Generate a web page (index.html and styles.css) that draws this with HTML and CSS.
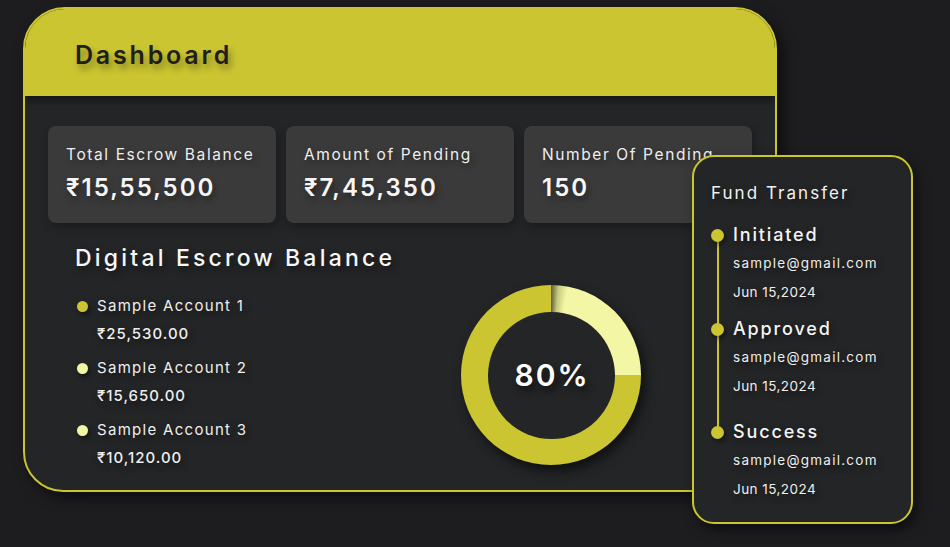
FILE: index.html
```html
<!DOCTYPE html>
<html lang="en">
<head>
<meta charset="utf-8">
<title>Dashboard</title>
<link rel="stylesheet" href="styles.css">
</head>
<body>
<div class="page">
  <section class="dash">
    <header class="dash-head"><h1>Dashboard</h1></header>
    <div class="dash-body">
      <div class="stats">
        <div class="stat"><div class="stat-label">Total Escrow Balance</div><div class="stat-value">₹15,55,500</div></div>
        <div class="stat"><div class="stat-label">Amount of Pending</div><div class="stat-value">₹7,45,350</div></div>
        <div class="stat"><div class="stat-label">Number Of Pending</div><div class="stat-value">150</div></div>
      </div>
      <div class="lower">
        <div class="balance">
          <h2>Digital Escrow Balance</h2>
          <ul class="legend">
            <li><span class="dot dot-strong"></span><div><div class="acc">Sample Account 1</div><div class="amt">₹25,530.00</div></div></li>
            <li><span class="dot dot-pale"></span><div><div class="acc">Sample Account 2</div><div class="amt">₹15,650.00</div></div></li>
            <li><span class="dot dot-pale"></span><div><div class="acc">Sample Account 3</div><div class="amt">₹10,120.00</div></div></li>
          </ul>
        </div>
        <div class="donut"><div class="donut-hole">80%</div></div>
      </div>
    </div>
  </section>
  <aside class="fund">
    <h3>Fund Transfer</h3>
    <div class="timeline">
      <div class="step"><div class="step-title"><span class="step-dot"></span>Initiated</div><div class="step-line step-mail">sample@gmail.com</div><div class="step-line step-date">Jun 15,2024</div></div>
      <div class="step"><div class="step-title"><span class="step-dot"></span>Approved</div><div class="step-line step-mail">sample@gmail.com</div><div class="step-line step-date">Jun 15,2024</div></div>
      <div class="step step-last"><div class="step-title"><span class="step-dot"></span>Success</div><div class="step-line step-mail">sample@gmail.com</div><div class="step-line step-date">Jun 15,2024</div></div>
    </div>
  </aside>
</div>
</body>
</html>
```

FILE: styles.css
```css
* { box-sizing: border-box; }
html, body { margin: 0; padding: 0; }
body {
  background: #1d1c1e;
  font-family: "Inter", "Noto Sans", sans-serif;
  color: #f1f1f1;
  width: 950px;
  height: 547px;
  overflow: hidden;
}
.page {
  position: relative;
  padding: 7px 0 0 23px;
  height: 547px;
}
.dash {
  width: 754px;
  height: 485px;
  border: 2px solid #cbc531;
  border-radius: 42px 42px 0 40px;
  background: #242527;
  overflow: hidden;
  box-shadow: 6px 6px 14px rgba(0,0,0,0.55);
  display: flex;
  flex-direction: column;
}
.dash-head {
  background: #cbc531;
  height: 87px;
  padding: 31px 0 0 50px;
  position: relative;
  z-index: 1;
  box-shadow: 0 4px 8px rgba(0,0,0,0.45);
}
.dash-head h1 {
  margin: 0;
  font-size: 25px;
  line-height: 30px;
  font-weight: 600;
  letter-spacing: 2.8px;
  color: #1f1e1a;
  text-shadow: 3px 5px 6px rgba(0,0,0,0.35);
}
.dash-body {
  padding: 30px 0 0 23px;
}
.stats {
  display: grid;
  grid-template-columns: repeat(3, 228px);
  gap: 10px;
}
.stat {
  background: #3a3a3b;
  border-radius: 8px;
  height: 97px;
  padding: 19px 0 0 18px;
  box-shadow: 2px 4px 8px rgba(0,0,0,0.3);
  overflow: hidden;
  white-space: nowrap;
}
.stat-label {
  font-size: 15.5px;
  line-height: 20px;
  letter-spacing: 1.6px;
  color: #eeeeee;
  text-shadow: 2px 3px 6px rgba(0,0,0,0.4);
}
.stat-value {
  margin-top: 8px;
  font-size: 24px;
  line-height: 30px;
  font-weight: 600;
  letter-spacing: 2px;
  color: #f6f6f6;
  text-shadow: 2px 4px 6px rgba(0,0,0,0.4);
}
.lower {
  display: flex;
  margin-top: 21px;
  padding-left: 27px;
}
.balance { width: 386px; }
.balance h2 {
  margin: 0;
  font-size: 23px;
  line-height: 28px;
  font-weight: 500;
  letter-spacing: 3.2px;
  color: #f7f7f7;
  text-shadow: 3px 4px 7px rgba(0,0,0,0.5);
}
.legend {
  list-style: none;
  margin: 20px 0 0;
  padding: 0 0 0 2px;
  display: flex;
  flex-direction: column;
  gap: 6px;
}
.legend li {
  display: flex;
  align-items: flex-start;
  gap: 9px;
}
.dot {
  width: 11px;
  height: 11px;
  border-radius: 50%;
  margin-top: 8.5px;
  flex: none;
  box-shadow: 2px 3px 5px rgba(0,0,0,0.5);
}
.dot-strong { background: #cbc531; }
.dot-pale { background: #f2f6a3; }
.acc, .amt {
  font-size: 15px;
  line-height: 28px;
  letter-spacing: 1.3px;
  color: #efefef;
  text-shadow: 2px 3px 6px rgba(0,0,0,0.5);
  white-space: nowrap;
}
.amt { font-weight: 500; letter-spacing: 1px; }
.donut {
  margin-top: 41px;
  width: 180px;
  height: 180px;
  border-radius: 50%;
  background: conic-gradient(#5f5e36 0deg, #c9cc80 5deg, #f2f6a5 11deg, #f2f6a5 90deg, #cbc531 90deg 360deg);
  box-shadow: 4px 6px 12px rgba(0,0,0,0.6);
  display: flex;
  align-items: center;
  justify-content: center;
}
.donut-hole {
  width: 127px;
  height: 127px;
  border-radius: 50%;
  background: #242527;
  display: flex;
  align-items: center;
  justify-content: center;
  font-size: 30px;
  font-weight: 600;
  letter-spacing: 2px;
  color: #ffffff;
  text-shadow: 3px 5px 7px rgba(0,0,0,0.6);
  padding-left: 2px;
}
.fund {
  position: absolute;
  left: 692px;
  top: 155px;
  width: 221px;
  height: 369px;
  border: 2px solid #cbc531;
  border-radius: 22px;
  background: #242527;
  box-shadow: 4px 6px 12px rgba(0,0,0,0.5);
  padding: 25px 0 0 17px;
}
.fund h3 {
  margin: 0;
  font-size: 17px;
  line-height: 22px;
  font-weight: 400;
  letter-spacing: 2.05px;
  color: #f1f1f1;
  text-shadow: 2px 3px 6px rgba(0,0,0,0.5);
}
.timeline {
  position: relative;
  margin-top: 17px;
}
.timeline::before {
  content: "";
  position: absolute;
  left: 6px;
  top: 14px;
  width: 2px;
  height: 197px;
  background: #cbc531;
}
.step + .step { margin-top: 8px; }
.step.step-last { margin-top: 17px; }
.step-title {
  display: flex;
  align-items: center;
  gap: 9px;
  font-size: 18px;
  line-height: 28px;
  font-weight: 500;
  letter-spacing: 1.85px;
  color: #f4f4f4;
  text-shadow: 2px 3px 6px rgba(0,0,0,0.5);
}
.step-dot {
  position: relative;
  width: 13px;
  height: 13px;
  border-radius: 50%;
  background: #cbc531;
  flex: none;
  box-shadow: 2px 3px 5px rgba(0,0,0,0.45);
}
.step-line {
  padding-left: 22px;
  font-size: 13.5px;
  line-height: 29px;
  color: #eeeeee;
  text-shadow: 2px 3px 6px rgba(0,0,0,0.5);
  white-space: nowrap;
}
.step-mail { letter-spacing: 1.25px; }
.step-date { letter-spacing: 0.45px; }
```
